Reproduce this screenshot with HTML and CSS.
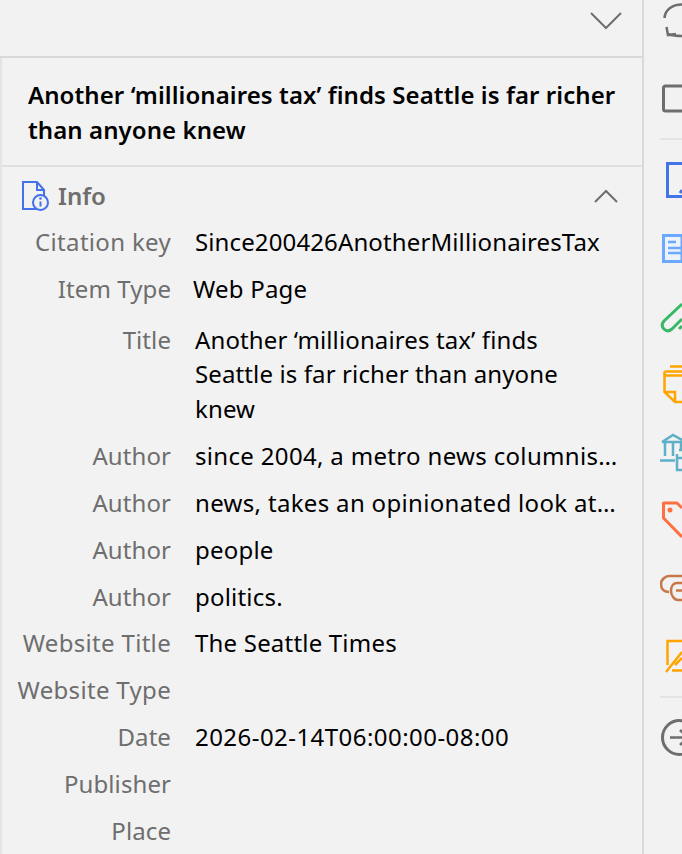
FILE: index.html
```html
<!DOCTYPE html>
<html lang="en">
<head>
<meta charset="utf-8">
<title>Info</title>
<link rel="stylesheet" href="styles.css">
</head>
<body>
<div class="app">
  <main class="pane">
    <header class="topbar">
      <svg class="chev-down" width="34" height="20" viewBox="0 0 34 20"><path d="M2 3l15 15L32 3" /></svg>
    </header>
    <div class="body">
      <h1 class="headline">Another ‘millionaires tax’ finds Seattle is far richer than anyone knew</h1>
      <section class="info">
        <div class="info-head">
          <svg class="info-icon" width="30" height="32" viewBox="0 0 30 32">
            <path class="b" d="M16 29H2V2h14l7 8v6M16 2v8h7"/>
            <circle class="b" cx="19.500" cy="22.500" r="7.500"/>
            <path class="b" d="M19.500 21.500v5"/>
            <circle class="dot" cx="19.500" cy="18.500" r="1.300"/>
          </svg>
          <span class="info-title">Info</span>
          <svg class="chev-up" width="26" height="16" viewBox="0 0 26 16"><path d="M2 14L13 3l11 11" /></svg>
        </div>
        <dl class="fields">
          <div class="row"><dt class="wide">Citation key</dt><dd class="key">Since200426AnotherMillionairesTax</dd></div>
          <div class="row type"><dt>Item Type</dt><dd>Web Page</dd></div>
          <div class="row title"><dt>Title</dt><dd>Another ‘millionaires tax’ finds Seattle is far richer than anyone knew</dd></div>
          <div class="row"><dt>Author</dt><dd class="clip">since 2004, a metro news columnis…</dd></div>
          <div class="row"><dt>Author</dt><dd class="clip">news, takes an opinionated look at…</dd></div>
          <div class="row"><dt>Author</dt><dd>people</dd></div>
          <div class="row"><dt>Author</dt><dd>politics.</dd></div>
          <div class="row"><dt class="wide">Website Title</dt><dd>The Seattle Times</dd></div>
          <div class="row"><dt class="wide">Website Type</dt><dd></dd></div>
          <div class="row"><dt>Date</dt><dd class="date">2026-02-14T06:00:00-08:00</dd></div>
          <div class="row"><dt>Publisher</dt><dd></dd></div>
          <div class="row"><dt>Place</dt><dd></dd></div>
        </dl>
      </section>
    </div>
  </main>
  <aside class="rail">
    <div class="rail-top">
      <svg class="ic" width="22" height="40" viewBox="0 0 22 40"><path class="g" d="M4.500 18C5 10 12 4.500 22 4.500M6.500 27l1.500 8 8-1M8 34c4 1.500 10 2 14 2"/></svg>
    </div>
    <div class="slot view">
      <svg class="ic" width="22" height="40" viewBox="0 0 22 40"><rect class="g thick" x="3.500" y="8" width="40" height="25" rx="2"/></svg>
    </div>
    <div class="rail-list">
      <div class="slot"><svg class="ic" width="22" height="40" viewBox="0 0 22 40"><path class="blue" d="M22 3.500H7.500v33H22M20 33l2-3"/></svg></div>
      <div class="slot"><svg class="ic" width="22" height="40" viewBox="0 0 22 40"><path class="sky" d="M22 7.500H3.500v26H22z"/><path class="sky-lines" d="M8 14h8M8 20h14M8 25h14"/></svg></div>
      <div class="slot"><svg class="ic" width="22" height="40" viewBox="0 0 22 40"><path class="green" d="M22 8L4 25c-2.500 3-2 6 0 8s5 2.500 8 0l10-10M19 33l3-3"/></svg></div>
      <div class="slot"><svg class="ic" width="22" height="40" viewBox="0 0 22 40"><path class="orange" d="M10 2.500h12M4.500 7.500H22M4.500 7.500V28L15 38h7M5 11.500h17M5 28h10v10"/></svg></div>
      <div class="slot"><svg class="ic" width="22" height="40" viewBox="0 0 22 40"><path class="teal" d="M2 10l11-7 9 5M2 10h20M5 11v13M13 11v13M21 11v6M0 28.500h15M17 22v16h5M17 26h5M19 18h3"/></svg></div>
      <div class="slot"><svg class="ic" width="22" height="40" viewBox="0 0 22 40"><path class="coral" d="M22 8l-5-5H3.500v15L22 37"/><circle class="coral-dot" cx="10" cy="10" r="2.500"/></svg></div>
      <div class="slot"><svg class="ic" width="22" height="40" viewBox="0 0 22 40"><path class="brown" d="M9 24C3 24 1 20 1 16s4-8 8-8h13M22 15h-5c-4 0-6 4-6 8s3 9 7 9h4M16 22.500h6"/></svg></div>
      <div class="slot"><svg class="ic" width="22" height="40" viewBox="0 0 22 40"><path class="orange" d="M22 5H7.500v24M6 36l16-20M12 34.500h10M15 29l7-7"/></svg></div>
    </div>
    <div class="slot add">
      <svg class="ic" width="22" height="40" viewBox="0 0 22 40"><circle class="g thick" cx="19.500" cy="20.500" r="17"/><path class="g" d="M10 20.500h12M20 13l3 3M20 28l3-3"/></svg>
    </div>
  </aside>
</div>
</body>
</html>
```
FILE: styles.css
```css
* { box-sizing: border-box; }
html, body { margin: 0; height: 100%; }
body {
  background: #f2f2f2;
  font-family: "Noto Sans", "Open Sans", sans-serif;
  overflow: hidden;
}
.app { display: flex; height: 854px; width: 682px; overflow: hidden; }
.pane { width: 644px; flex: none; border-right: 2px solid #d9d9d9; }
.topbar {
  height: 58px;
  border-bottom: 2px solid #d9d9d9;
  display: flex;
  justify-content: flex-end;
  padding: 10px 19px 0 0;
}
.chev-down path, .chev-up path { fill: none; stroke: #6e6e6e; stroke-width: 2; }
.body { border-left: 2px solid #e4e4e4; }
.headline {
  margin: 0;
  padding: 19px 20px 20px 26px;
  height: 109px;
  font-size: 24px;
  line-height: 35px;
  font-weight: 600;
  letter-spacing: .08px;
  color: #000;
  border-bottom: 2px solid #e0e0e0;
}
.info-head {
  display: flex;
  align-items: center;
  height: 57px;
  padding: 0 23px 0 19px;
}
.info-icon { margin-right: 7px; }
.info-icon .b { fill: none; stroke: #4472e8; stroke-width: 2; }
.info-icon .dot { fill: #4472e8; }
.info-title { font-size: 24px; font-weight: 600; color: #6e6e6e; flex: 1; }
.fields { margin: 0; padding-top: 1px; }
.row { display: flex; gap: 24px; min-height: 46.900px; align-items: flex-start; font-size: 24px; line-height: 34.500px; }
.row.type { min-height: 50px; }
.row.type dd { margin-left: -2px; }
.row.title { min-height: 117px; padding-top: 1px; }
.row.title dd { width: 375px; letter-spacing: .12px; }
dt { width: 169px; flex: none; text-align: right; color: #6e6e6e; letter-spacing: .08px; }
dt.wide { letter-spacing: .32px; }
dd { margin: 0; width: 424px; color: #000; letter-spacing: .2px; }
dd.key { letter-spacing: .12px; }
dd.date { letter-spacing: .45px; }
dd.clip { white-space: nowrap; letter-spacing: .33px; }
.rail { flex: 1; min-width: 0; overflow: hidden; }
.rail-top { height: 58px; padding-left: 16px; }
.ic { display: block; flex: none; }
.slot { height: 68px; padding-left: 16px; display: flex; align-items: center; }
.view { height: 79px; }
.rail-list { margin-left: 16px; margin-top: 1px; padding-top: 6px; padding-bottom: 6px; border-top: 2px solid #e4e4e4; border-bottom: 2px solid #e4e4e4; }
.rail-list .slot { padding-left: 0; }
.add { margin-top: 5px; }
.g { fill: none; stroke: #6e6e6e; stroke-width: 2.500; }
.g.thick { stroke-width: 3; }
.blue { fill: none; stroke: #4472e8; stroke-width: 3; }
.sky { fill: #eef3fb; stroke: #6aa9ff; stroke-width: 3; }
.sky-lines { fill: none; stroke: #6aa9ff; stroke-width: 2.500; }
.green { fill: none; stroke: #39b866; stroke-width: 3; }
.orange { fill: none; stroke: #ffa500; stroke-width: 2.500; }
.teal { fill: none; stroke: #5cb0c8; stroke-width: 2.500; }
.coral { fill: none; stroke: #ff7040; stroke-width: 3; stroke-linejoin: round; }
.coral-dot { fill: #ff7040; }
.brown { fill: none; stroke: #c87848; stroke-width: 2.500; }
```
